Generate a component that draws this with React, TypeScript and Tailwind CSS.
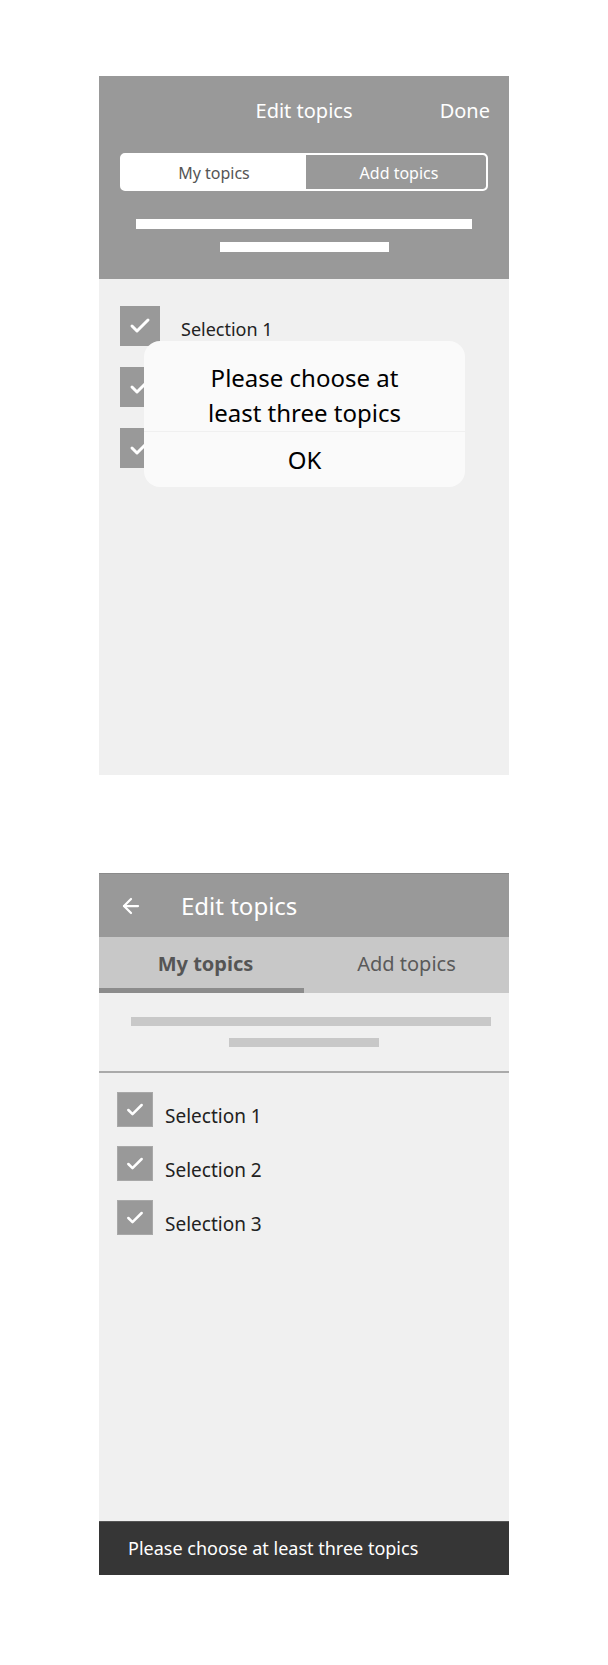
import { ArrowLeft, Check } from "lucide-react";

const font = "font-['Noto_Sans',sans-serif]";

function CheckBox({ size }: { size: "lg" | "sm" }) {
  return (
    <div
      className={
        size === "lg"
          ? "w-[40px] h-[40px] bg-[#999999] flex items-center justify-center shrink-0"
          : "w-[36px] h-[35px] bg-[#999999] border border-[#a8a8a8] flex items-center justify-center shrink-0"
      }
    >
      <Check className="text-white" size={size === "lg" ? 24 : 20} strokeWidth={3} />
    </div>
  );
}

function IosScreen() {
  return (
    <div className="w-[410px] mx-auto">
      {/* Header */}
      <div className="bg-[#999999] h-[203px] flex flex-col">
        <div className="grid grid-cols-[1fr_auto_1fr] items-center h-[66px] pt-[3px]">
          <div />
          <p className="text-white text-[20px]">Edit topics</p>
          <p className="text-white text-[20px] justify-self-end pr-[19px]">Done</p>
        </div>

        {/* Segmented control */}
        <div className="mx-[21px] mt-[11px] h-[38px] rounded-[5px] border-2 border-white bg-white flex overflow-hidden">
          <div className="w-[184px] flex items-center justify-center text-[16px] text-[#555555] pt-[2px]">
            My topics
          </div>
          <div className="flex-1 flex items-center justify-center text-[16px] text-white bg-[#999999] rounded-r-[3px] pt-[2px] pl-[6px]">
            Add topics
          </div>
        </div>

        <div className="mt-[28px] h-[10px] w-[336px] mx-auto bg-white" />
        <div className="mt-[13px] h-[10px] w-[169px] mx-auto bg-white" />
      </div>

      {/* Content */}
      <div className="relative bg-[#f0f0f0] h-[496px] pt-[27px] pl-[21px]">
        <div className="flex flex-col gap-[21px]">
          <div className="flex items-center gap-[21px]">
            <CheckBox size="lg" />
            <span className="text-[18px] text-[#222222] pt-[6px]">Selection 1</span>
          </div>
          {/* rows 2 and 3 sit under the alert */}
          <CheckBox size="lg" />
          <CheckBox size="lg" />
        </div>

        {/* Alert dialog */}
        <div className="absolute left-[45px] top-[62px] w-[321px] h-[146px] rounded-[16px] bg-[#fafafa] flex flex-col">
          <div className="h-[91px] border-b border-[#f0f0f0] flex flex-col items-center justify-end pb-[1px] text-[24px] leading-[35px] text-black text-center">
            <p>Please choose at</p>
            <p>least three topics</p>
          </div>
          <div className="flex-1 flex items-center justify-center text-[24px] text-black">OK</div>
        </div>
      </div>
    </div>
  );
}

function AndroidScreen() {
  return (
    <div className="w-[410px] mx-auto mt-[98px] flex flex-col">
      {/* App bar */}
      <div className="bg-[#999999] h-[64px] border-t border-[#8a8a8a] flex items-center">
        <ArrowLeft className="text-white ml-[20px]" size={24} strokeWidth={2.25} />
        <p className="text-white text-[24px] ml-[38px]">Edit topics</p>
      </div>

      {/* Tabs */}
      <div className="bg-[#c8c8c8] h-[56px] flex">
        <div className="flex-1 flex flex-col">
          <div className="flex-1 flex items-center justify-center text-[20px] font-bold text-[#555555] pt-[3px] pl-[8px]">
            My topics
          </div>
          <div className="h-[5px] bg-[#8c8c8c]" />
        </div>
        <div className="flex-1 flex items-center justify-center text-[20px] text-[#5a5a5a] pb-[2px]">
          Add topics
        </div>
      </div>

      <div className="bg-[#f0f0f0] h-[78px] pt-[24px]">
        <div className="h-[9px] w-[360px] ml-[32px] bg-[#c8c8c8]" />
        <div className="mt-[12px] h-[9px] w-[150px] mx-auto bg-[#c8c8c8]" />
      </div>
      <div className="h-[2px] bg-[#aaaaaa]" />

      {/* List */}
      <div className="bg-[#f0f0f0] h-[448px] pt-[19px] pl-[18px]">
        <div className="flex flex-col gap-[19px]">
          {["Selection 1", "Selection 2", "Selection 3"].map((s) => (
            <div key={s} className="flex items-center gap-[12px] h-[35px]">
              <CheckBox size="sm" />
              <span className="text-[19px] leading-none text-[#222222] mt-[14px]">{s}</span>
            </div>
          ))}
        </div>
      </div>

      {/* Snackbar */}
      <div className="bg-[#363636] h-[54px] flex items-center pl-[29px] border-t border-[#555555]">
        <p className="text-white text-[18px]">Please choose at least three topics</p>
      </div>
    </div>
  );
}

export default function App() {
  return (
    <div className={`min-h-[1665px] bg-white pt-[76px] ${font}`}>
      <IosScreen />
      <AndroidScreen />
    </div>
  );
}
